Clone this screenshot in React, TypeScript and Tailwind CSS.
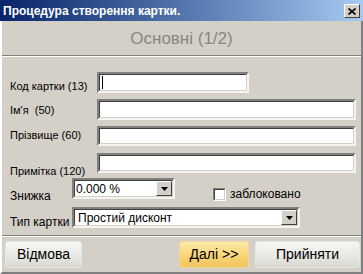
import React from 'react';

const font = { fontFamily: '"Liberation Sans", Arial, sans-serif' };

function Sunken({ className = '', children }: { className?: string; children?: React.ReactNode }) {
  return (
    <div className={`border-2 border-t-[#808080] border-l-[#808080] border-b-[#f4f4f2] border-r-[#f4f4f2] bg-white ${className}`}>
      <div className="h-full w-full border border-t-[#404040] border-l-[#404040] border-b-[#d4d0c8] border-r-[#d4d0c8] flex items-center">
        {children}
      </div>
    </div>
  );
}

function ComboArrow() {
  return (
    <div className="ml-auto h-full w-[16px] bg-[#d4d0c8] border border-t-white border-l-white border-b-[#404040] border-r-[#404040] flex items-center justify-center">
      <svg width="7" height="4" viewBox="0 0 7 4">
        <path d="M0 0h7L3.5 4z" fill="#000" />
      </svg>
    </div>
  );
}

function XpButton({ label, yellow = false, className = '' }: { label: string; yellow?: boolean; className?: string }) {
  return (
    <button
      className={`h-[27px] rounded-[3px] border text-[14px] text-black flex items-center justify-center ${
        yellow
          ? 'border-[#f0d8a0] bg-gradient-to-b from-[#fde9a8] via-[#f9d77a] to-[#f2c45c]'
          : 'border-[#e8e8e4] bg-gradient-to-b from-[#f6f6f3] via-[#e9e9e5] to-[#d9d9d3]'
      } ${className}`}
    >
      {label}
    </button>
  );
}

export default function App() {
  return (
    <div className="w-[363px] h-[274px] bg-[#d4d0c8] flex flex-col overflow-hidden text-[11px] text-black" style={font}>
      {/* Title bar */}
      <div className="h-[21px] flex items-center justify-between pl-[3px] pr-[3px] bg-gradient-to-r from-[#0a246a] to-[#a6caf0]">
        <span className="text-white font-bold text-[12px] leading-none">Процедура створення картки.</span>
        <div className="mt-[1px] w-[16px] h-[14px] bg-[#d4d0c8] border border-t-white border-l-white border-b-[#404040] border-r-[#404040] flex items-center justify-center">
          <svg width="8" height="7" viewBox="0 0 8 7">
            <path d="M0.5 0.5l7 6M7.5 0.5l-7 6" stroke="#000" strokeWidth="1.6" />
          </svg>
        </div>
      </div>

      <div className="flex-1 flex flex-col border-l-2 border-l-white border-r-2 border-r-[#808080] border-b-2 border-b-[#808080]">
        {/* Header */}
        <div className="h-[34px] flex items-center justify-center pt-[1px] text-[17px] text-[#868686]">Основні (1/2)</div>
        <div className="border-t border-t-[#808080] border-b border-b-white" />

        {/* Form */}
        <div className="flex flex-col pl-[8px] pr-[5px] pt-[15px]">
          <div className="flex h-[21px]">
            <span className="w-[87px] pt-[8px] leading-[13px]">Код картки (13)</span>
            <Sunken className="w-[152px] h-[21px]">
              <span className="ml-[2px] w-[1px] h-[13px] bg-black" />
            </Sunken>
          </div>
          <div className="flex h-[21px] mt-[6px]">
            <span className="w-[87px] pt-[5px] leading-[13px] whitespace-pre">Ім'я  (50)</span>
            <Sunken className="flex-1 h-[21px]" />
          </div>
          <div className="flex h-[21px] mt-[6px]">
            <span className="w-[87px] pt-[3px] leading-[13px]">Прізвище (60)</span>
            <Sunken className="flex-1 h-[20px]" />
          </div>
          <div className="flex h-[20px] mt-[6px]">
            <span className="w-[87px] pt-[12px] leading-[13px] whitespace-nowrap">Примітка (120)</span>
            <Sunken className="flex-1 h-[20px]" />
          </div>
          <div className="flex h-[21px] mt-[5px] items-start">
            <span className="w-[62px] pt-[12px] leading-[13px] text-[12px]">Знижка</span>
            <Sunken className="w-[103px] h-[21px]">
              <span className="ml-[1px] text-[12px]">0.000 %</span>
              <ComboArrow />
            </Sunken>
            <div className="ml-[38px] mt-[7px] flex items-center">
              <div className="w-[13px] h-[13px] border border-t-[#808080] border-l-[#808080] border-b-white border-r-white">
                <div className="w-full h-full bg-white border border-t-[#404040] border-l-[#404040] border-b-[#d4d0c8] border-r-[#d4d0c8]" />
              </div>
              <span className="ml-[4px] text-[12px]">заблоковано</span>
            </div>
          </div>
          <div className="flex h-[20px] mt-[8px]">
            <span className="w-[62px] pt-[9px] leading-[13px] text-[12px] whitespace-nowrap">Тип картки</span>
            <Sunken className="w-[228px] h-[21px]">
              <span className="ml-[3px] text-[12px]">Простий дисконт</span>
              <ComboArrow />
            </Sunken>
          </div>
        </div>

        {/* Bottom */}
        <div className="mt-[8px] border-t border-t-[#808080] border-b border-b-white" />
        <div className="flex items-center pl-[3px] pr-[1px] pt-[4px]">
          <XpButton label="Відмова" className="w-[77px]" />
          <XpButton label="Далі >>" yellow className="ml-auto w-[70px]" />
          <XpButton label="Прийняти" className="ml-[6px] w-[105px]" />
        </div>
      </div>
    </div>
  );
}
